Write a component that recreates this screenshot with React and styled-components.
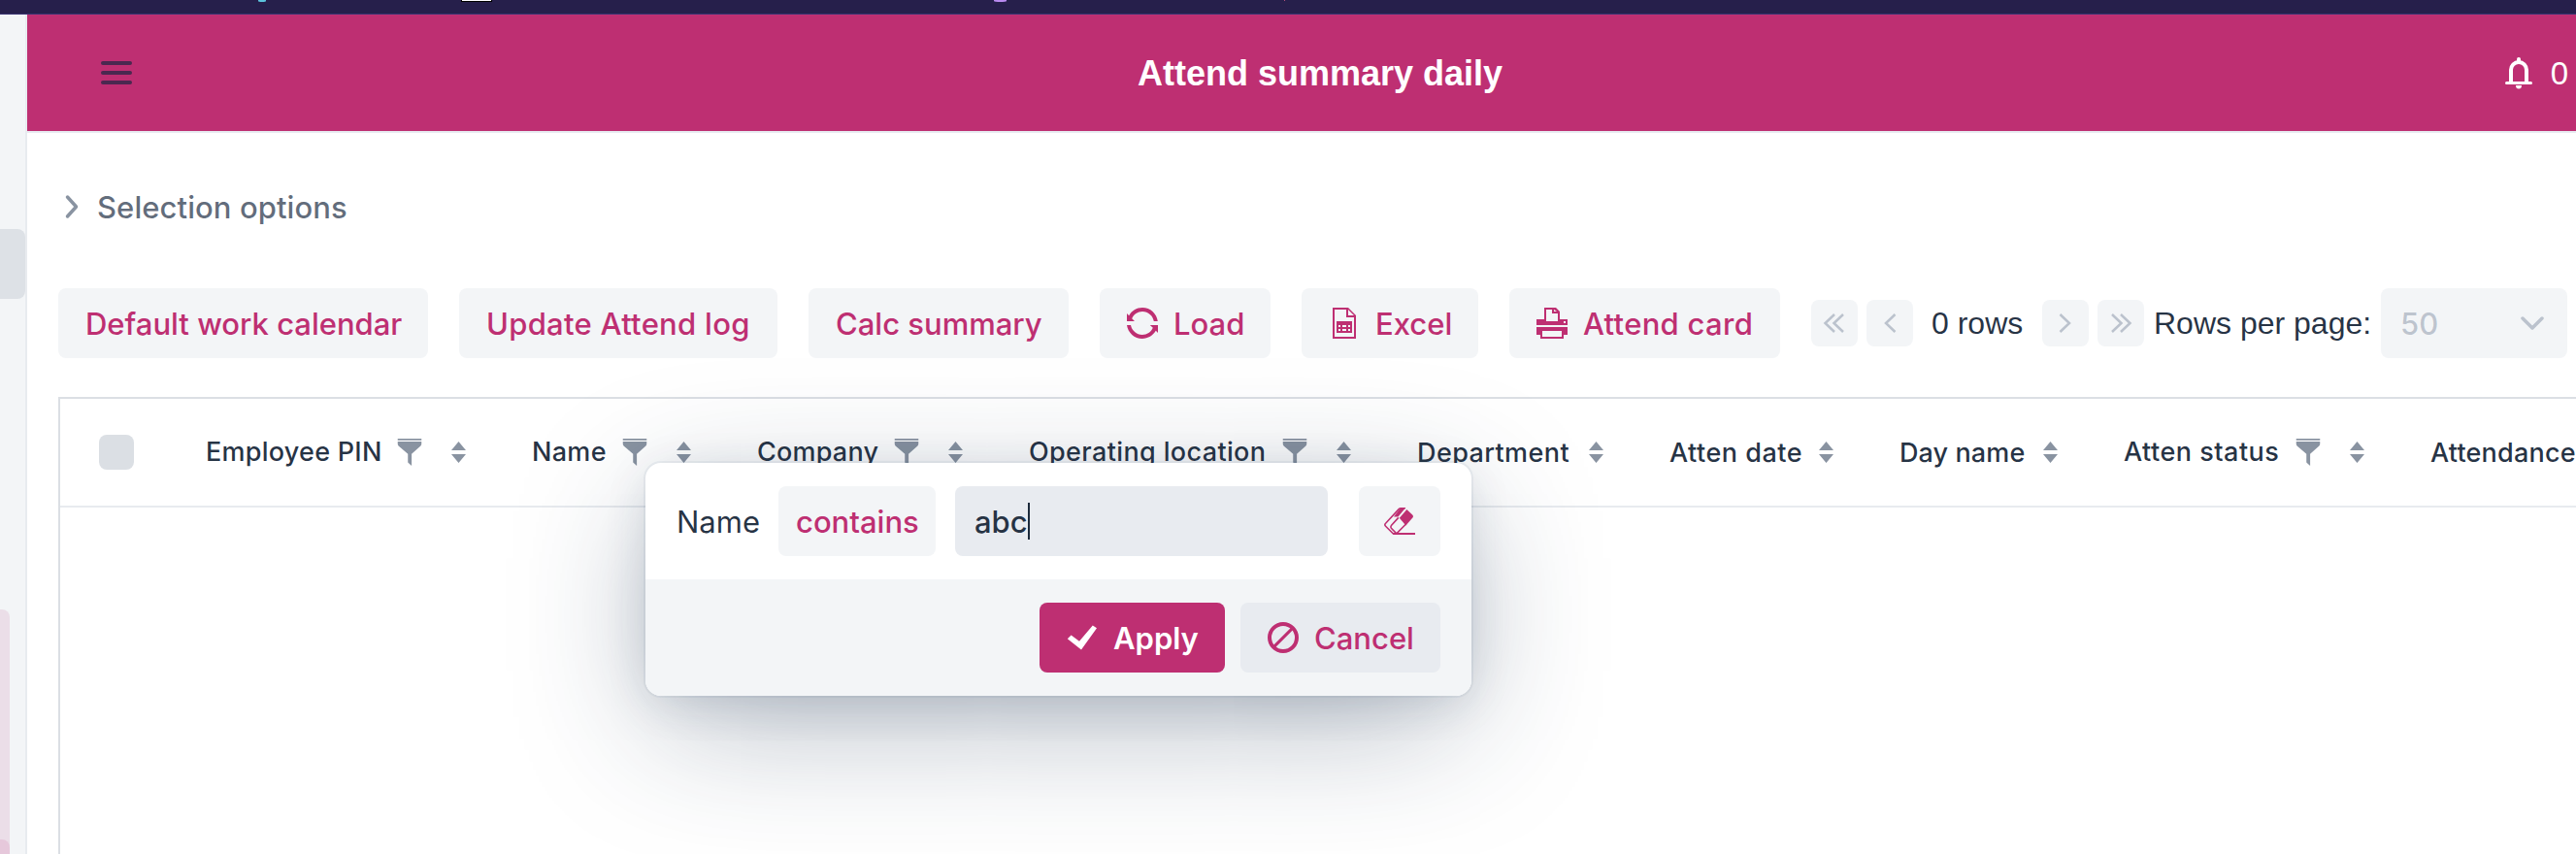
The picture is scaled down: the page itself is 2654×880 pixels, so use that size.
import React from 'react';
import styled, { createGlobalStyle } from 'styled-components';

const PINK = '#be2f72';
const BODY = 'hsla(214, 40%, 16%, 0.94)';
const SECONDARY = 'hsla(214, 42%, 18%, 0.69)';
const TERTIARY = 'hsla(214, 45%, 20%, 0.52)';
const DISABLED = 'hsla(214, 50%, 22%, 0.26)';
const SHADE5 = 'hsla(214, 61%, 25%, 0.05)';
const SHADE20 = 'hsla(214, 53%, 23%, 0.16)';

const Global = createGlobalStyle`
  * { box-sizing: border-box; }
  body { margin: 0; background: #fff; overflow: hidden; }
  button, input { font: inherit; border: 0; margin: 0; }
`;

const Page = styled.div`
  display: flex;
  flex-direction: column;
  width: 2654px;
  height: 880px;
  overflow: hidden;
  font-family: Inter, 'Liberation Sans', sans-serif;
  font-size: 31px;
  color: ${BODY};
`;
const Strip = styled.div`
  display: flex;
  align-items: flex-start;
  flex: 0 0 15px;
  background: #261f4b;
  border-bottom: 1px solid #3a3573;
`;
const Mark = styled.span`
  width: ${(p) => p.$w}px;
  height: ${(p) => p.$h || 2}px;
  margin-left: ${(p) => p.$gap}px;
  background: ${(p) => p.$color};
  border: solid #000;
  border-width: ${(p) => (p.$framed ? '0 1px 1px' : '0')};
  border-radius: ${(p) => (p.$round ? '0 0 50% 50%' : '0')};
`;
const Shell = styled.div`
  display: flex;
  flex: 1;
  min-height: 0;
`;
const Side = styled.aside`
  display: flex;
  flex-direction: column;
  flex: 0 0 28px;
  background: ${SHADE5};
  border-right: 2px solid #e8ebef;
`;
const SideItem = styled.div`
  height: 72px;
  margin-top: 221px;
  border-radius: 0 8px 8px 0;
  background: #dde1e6;
`;
const SidePanel = styled.div`
  display: flex;
  flex-direction: column;
  justify-content: flex-end;
  width: 10px;
  flex: 1;
  margin-top: 320px;
  border-radius: 0 8px 0 0;
  background: #ebdee8;
`;
const SidePanelItem = styled.div`
  height: 15px;
  border-radius: 0 8px 0 0;
  background: #e6c8db;
`;
const Main = styled.main`
  display: flex;
  flex-direction: column;
  flex: 1;
  min-width: 0;
`;
const Header = styled.header`
  display: flex;
  align-items: center;
  flex: 0 0 122px;
  padding: 0 8px 0 76px;
  background: ${PINK};
  background-clip: padding-box;
  border-bottom: 2px solid #e8ebf1;
  color: #fff;
`;
const Burger = styled.div`
  display: flex;
  flex-direction: column;
  gap: 6px;
  width: 32px;
`;
const BurgerLine = styled.i`
  height: 4px;
  border-radius: 2px;
  background: #4b2850;
`;
const Title = styled.h1`
  margin: 0 auto 0 1036px;
  padding-top: 2px;
  font: bold 36px 'Liberation Sans', sans-serif;
`;
const Alerts = styled.div`
  display: flex;
  align-items: center;
  gap: 19px;
  padding-top: 1px;
  font-family: 'Liberation Sans', sans-serif;
  font-size: 33px;
`;
const Details = styled.div`
  display: flex;
  align-items: center;
  gap: 16px;
  height: 72px;
  margin: 40px 0 0 36px;
  color: ${SECONDARY};
  font-weight: 500;

  svg {
    color: ${TERTIARY};
  }
`;
const Text = styled.span`
  white-space: nowrap;
  letter-spacing: ${(p) => p.$ls || 0}px;
`;
const Toolbar = styled.div`
  display: flex;
  align-items: center;
  margin: 48px 0 0 32px;
`;
const Button = styled.button`
  display: flex;
  align-items: center;
  flex: none;
  gap: 16px;
  width: ${(p) => p.$w}px;
  height: 72px;
  margin-right: ${(p) => (p.$mr === undefined ? 32 : p.$mr)}px;
  padding: 0 0 0 ${(p) => p.$pl}px;
  border-radius: 8px;
  background: ${(p) => (p.$primary ? PINK : p.$deep ? '#e8ebf0' : '#f3f5f7')};
  color: ${(p) => (p.$primary ? '#fff' : PINK)};
  font-weight: ${(p) => (p.$primary ? 600 : 500)};
`;
const PageButton = styled.button`
  display: flex;
  align-items: center;
  justify-content: center;
  flex: none;
  width: 48px;
  height: 48px;
  margin-right: ${(p) => p.$mr}px;
  padding: 0;
  border-radius: 8px;
  background: ${SHADE5};
  color: ${DISABLED};
`;
const PagerText = styled.span`
  flex: none;
  width: ${(p) => p.$w}px;
  font-family: 'Liberation Sans', sans-serif;
  font-size: 32px;
  white-space: nowrap;
`;
const Select = styled.div`
  display: flex;
  align-items: center;
  justify-content: space-between;
  flex: none;
  width: 192px;
  height: 72px;
  padding: 0 24px 0 20px;
  border-radius: 8px;
  background: ${SHADE5};
  color: ${DISABLED};
  font-weight: 500;
`;
const Table = styled.section`
  flex: 1;
  margin: 40px 0 0 32px;
  border: solid ${SHADE20};
  border-width: 2px 0 0 2px;
`;
const HeadRow = styled.div`
  display: flex;
  height: 112px;
  border-bottom: 2px solid #e8ebef;
`;
const CheckCell = styled.div`
  display: flex;
  align-items: center;
  flex: 0 0 118px;
  padding-left: 40px;
`;
const Checkbox = styled.i`
  width: 36px;
  height: 36px;
  border-radius: 8px;
  background: ${SHADE20};
`;
const Cell = styled.div`
  display: flex;
  align-items: center;
  flex: 0 0 ${(p) => p.$w}px;
  padding: 0 36px 0 32px;
  font-size: 27px;
  font-weight: 500;
`;
const CellLabel = styled(Text)`
  padding-bottom: ${(p) => (p.$raised ? 2 : 0)}px;
`;
const CellIcons = styled.span`
  display: flex;
  align-items: center;
  gap: 29px;
  margin-left: auto;
  color: ${TERTIARY};
`;
const Popup = styled.div`
  position: absolute;
  left: 665px;
  top: 477px;
  width: 851px;
  height: 240px;
  border-radius: 16px;
  overflow: hidden;
  background: #fff;
  box-shadow: 0 0 0 2px ${SHADE5},
    0 8px 48px -6px ${SHADE20},
    0 36px 144px -14px hsla(214, 47%, 21%, 0.38);
`;
const PopupRow = styled.div`
  display: flex;
  align-items: center;
  height: 120px;
  padding: 0 32px;
`;
const PopupFooter = styled(PopupRow)`
  justify-content: flex-end;
  background: #f3f5f7;
`;
const FieldLabel = styled.span`
  width: 105px;
`;
const Field = styled.div`
  display: flex;
  align-items: center;
  width: 384px;
  height: 72px;
  margin-right: 32px;
  padding-left: 20px;
  border-radius: 8px;
  background: #e8ebf0;
  font-weight: 500;
`;
const Caret = styled.i`
  width: 2px;
  height: 38px;
  background: #1c2a3b;
`;

const Icon = ({ d, size = 32 }) => (
  <svg width={size} height={size} viewBox="0 0 16 16" fill="currentColor" fillRule="evenodd">
    <path d={d} />
  </svg>
);
const ICONS = {
  refresh:
    'M2.6 5.6C3.5 3.5 5.6 2 8 2c3 0 5.4 2.2 5.9 5h2C15.4 3.1 12.1 0 8 0 5 0 2.4 1.6 1.1 4.1L0 3v4h4zM16 9h-4.1l1.5 1.4C12.5 12.5 10.4 14 7.9 14 5 14 2.5 11.8 2 9H0c.5 3.9 3.9 7 7.9 7 3 0 5.6-1.7 7-4.1L16 13z',
  table:
    'M10 0H2v16h12V4zM13 15H3V1h6v4h4zM10 4V1l3 3zM4 7h8v6H4zM5 9v1h1V9zM7 9v1h2V9zM10 9v1h1V9zM5 11v1h1v-1zM7 11v1h2v-1zM10 11v1h1v-1z',
  print:
    'M4 6V0h6l2 2v4h4v3H0V6zM5 7h6V3H8V1H5zM9 1v1h1.5zM14 7v1h1V7zM0 10h16v4h-2v2H2v-2H0zM3 12v3h10v-3z',
  check: 'M.4 8.6 2.3 6.7 6.5 9.9 13.4 1.7 15.5 3.1 7.5 14.2z',
  filter: 'M1 0h14v1H1zM15 1.7H1V3c0 .8.5 1.3 1 1.7L7 9v5l2.200 2V9L14 4.700c.5-.4 1-.9 1-1.700z',
};
const Ban = () => (
  <svg width="32" height="32" viewBox="0 0 16 16" fill="none" stroke="currentColor">
    <circle cx="8" cy="8" r="7" strokeWidth="2" />
    <path d="M3.3 12.7 12.7 3.3" strokeWidth="1.5" />
  </svg>
);
const Eraser = () => (
  <svg width="32" height="32" viewBox="0 0 16 16" fill="none" stroke="currentColor" strokeWidth=".8">
    <path d="M7 14.400H4.600L.8 10.600c-.5-.5-.5-1 0-1.500L7.600 1.800c.3-.3.600-.4 1-.4h2.200" />
    <path d="M7.400 6.200 3.700 10.200c-.4.500-.4.900 0 1.400l2.700 2.800 5-5" />
    <path d="M5 5.800 8.600 1h2.600L7.200 5.800z" fill="currentColor" stroke="none" />
    <path d="M7.900 6.400 11.700 2l2.900 2.700c.5.500.5 1 .1 1.500L11.200 10.200z" fill="currentColor" stroke="none" />
    <path d="M4.600 14.500H16" strokeWidth="1" />
  </svg>
);
const Sorter = () => (
  <svg width="15" height="22" viewBox="0 0 15 22" fill="currentColor">
    <path d="M7.5 0 15 9H0zM0 13h15l-7.5 9z" />
  </svg>
);
const Chevron = ({ d, w, h, sw }) => (
  <svg
    width={w}
    height={h}
    viewBox={`0 0 ${w} ${h}`}
    fill="none"
    stroke="currentColor"
    strokeWidth={sw}
    strokeLinecap={sw > 3 ? 'round' : 'butt'}
    strokeLinejoin={sw > 3 ? 'round' : 'miter'}
  >
    <path d={d} />
  </svg>
);
const Bell = () => (
  <svg width="28" height="33" viewBox="0 0 28 33" fill="none" stroke="currentColor" strokeLinecap="round">
    <path d="M6 26V13a8 8 0 0 1 16 0v13" strokeWidth="4" strokeLinecap="butt" />
    <path d="M14 2v3" strokeWidth="4" />
    <path d="M1.5 26.5h25" strokeWidth="3" />
    <path d="M11 29h6c0 2.500-1 3.500-3 3.500s-3-1-3-3.500z" fill="currentColor" stroke="none" />
  </svg>
);

const COLUMNS = [
  { label: 'Employee PIN', w: 336, filter: true, ls: 0.25 },
  { label: 'Name', w: 232, filter: true, ls: 0.3 },
  { label: 'Company', w: 280, filter: true, ls: 0.2 },
  { label: 'Operating location', w: 400, filter: true, ls: 0.36 },
  { label: 'Department', w: 260, ls: 0.4 },
  { label: 'Atten date', w: 237, ls: 0.5 },
  { label: 'Day name', w: 231, ls: 0.1 },
  { label: 'Atten status', w: 316, filter: true, ls: 0.5 },
  { label: 'Attendance', w: 330, ls: 0.2 },
];

export default function App() {
  return (
    <Page>
      <Global />
      <Strip>
        <Mark $gap={266} $w={8} $color="#5cc3dc" $round />
        <Mark $gap={201} $w={32} $color="#fff" $framed />
        <Mark $gap={517} $w={13} $color="#b98af0" $round />
        <Mark $gap={286} $w={1} $h={1} $color="#b0507c" />
      </Strip>
      <Shell>
        <Side>
          <SideItem />
          <SidePanel><SidePanelItem /></SidePanel>
        </Side>
        <Main>
          <Header>
            <Burger><BurgerLine /><BurgerLine /><BurgerLine /></Burger>
            <Title>Attend summary daily</Title>
            <Alerts><Bell /><span>0</span></Alerts>
          </Header>
          <Details>
            <Chevron w={20} h={26} sw={3.5} d="M5.500 3 14.500 13 5.500 23" />
            <Text $ls={0.08}>Selection options</Text>
          </Details>
          <Toolbar>
            <Button $w={381} $pl={28}><Text>Default work calendar</Text></Button>
            <Button $w={328} $pl={28}><Text $ls={0.28}>Update Attend log</Text></Button>
            <Button $w={268} $pl={28}><Text>Calc summary</Text></Button>
            <Button $w={176} $pl={28}><Icon d={ICONS.refresh} /><Text>Load</Text></Button>
            <Button $w={182} $pl={28}><Icon d={ICONS.table} /><Text>Excel</Text></Button>
            <Button $w={279} $pl={28}><Icon d={ICONS.print} /><Text $ls={0.3}>Attend card</Text></Button>
            <PageButton $mr={9}>
              <Chevron w={24} h={20} sw={2.5} d="M12 1 2.500 10 12 19M21 1 11.500 10 21 19" />
            </PageButton>
            <PageButton $mr={19}>
              <Chevron w={16} h={20} sw={2.5} d="M13.500 1 4 10 13.500 19" />
            </PageButton>
            <PagerText $w={114}>0 rows</PagerText>
            <PageButton $mr={9}>
              <Chevron w={16} h={20} sw={2.5} d="M2.500 1 12 10 2.500 19" />
            </PageButton>
            <PageButton $mr={10}>
              <Chevron w={24} h={20} sw={2.5} d="M3 1 12.500 10 3 19M12 1 21.500 10 12 19" />
            </PageButton>
            <PagerText $w={234}>Rows per page:</PagerText>
            <Select>
              <Text>50</Text>
              <Chevron w={24} h={16} sw={3.5} d="M2 3 12 13 22 3" />
            </Select>
          </Toolbar>
          <Table>
            <HeadRow>
              <CheckCell><Checkbox /></CheckCell>
              {COLUMNS.map((c) => (
                <Cell key={c.label} $w={c.w}>
                  <CellLabel $ls={c.ls} $raised={c.filter}>{c.label}</CellLabel>
                  <CellIcons>
                    {c.filter && <Icon d={ICONS.filter} size={28} />}
                    <Sorter />
                  </CellIcons>
                </Cell>
              ))}
            </HeadRow>
          </Table>
        </Main>
      </Shell>
      <Popup>
        <PopupRow>
          <FieldLabel>Name</FieldLabel>
          <Button $w={162} $pl={18} $mr={20}><Text>contains</Text></Button>
          <Field><Text>abc</Text><Caret /></Field>
          <Button $w={84} $pl={26} $mr={0}><Eraser /></Button>
        </PopupRow>
        <PopupFooter>
          <Button $primary $w={191} $pl={28} $mr={16}><Icon d={ICONS.check} /><Text>Apply</Text></Button>
          <Button $deep $w={206} $pl={28} $mr={0}><Ban /><Text>Cancel</Text></Button>
        </PopupFooter>
      </Popup>
    </Page>
  );
}
